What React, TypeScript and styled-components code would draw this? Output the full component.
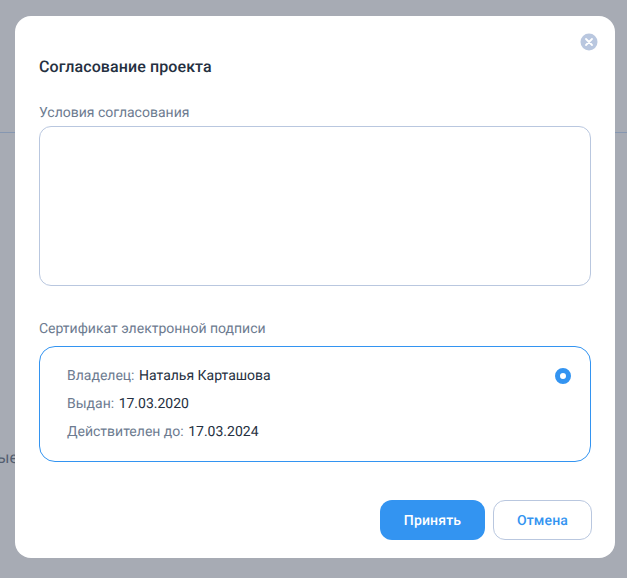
import React, { useState } from 'react';
import styled, { createGlobalStyle, css } from 'styled-components';

const GlobalStyle = createGlobalStyle`
  *, *::before, *::after { box-sizing: border-box; }
  body {
    margin: 0;
    overflow: hidden;
    background: #a7abb4;
    font-family: Roboto, 'Liberation Sans', sans-serif;
    font-size: 14px;
    color: #253041;
    text-rendering: geometricPrecision;
  }
`;

const Page = styled.div`
  position: relative;
  display: flex;
  justify-content: center;
  align-items: flex-start;
  height: 578px;
  width: 627px;
  padding: 16px 12px 0 15px;
  overflow: hidden;
`;

const Backdrop = styled.div`
  position: absolute;
  inset: 0;
  padding-top: 132px;
`;

const BackdropRule = styled.div`
  height: 1px;
  background: #8697b1;
`;

const BackdropText = styled.div`
  width: 18px;
  margin-top: 315px;
  display: flex;
  justify-content: flex-end;
  font-size: 16px;
  line-height: 20px;
  color: #535e70;
`;

const Modal = styled.form`
  position: relative;
  display: flex;
  flex-direction: column;
  width: 600px;
  height: 542px;
  padding: 41px 24px 18px;
  border-radius: 16px;
  background: #fff;
`;

const CloseButton = styled.button`
  position: absolute;
  top: 17px;
  right: 17px;
  width: 18px;
  height: 18px;
  padding: 0;
  border: 0;
  background: none;
  cursor: pointer;

  svg { display: block; }
`;

const Title = styled.h1`
  margin: 0 0 26px;
  font-size: 16px;
  font-weight: 500;
  line-height: 20px;
  letter-spacing: 0.1px;
`;

const Label = styled.label<{ $gap: number }>`
  display: block;
  margin-bottom: ${({ $gap }) => $gap}px;
  line-height: 20px;
  color: #6d7b90;
`;

const Terms = styled.textarea`
  display: block;
  flex: none;
  width: 552px;
  height: 160px;
  margin: 0 0 33px;
  padding: 12px;
  border: 1px solid #b9c7df;
  border-radius: 12px;
  outline: none;
  resize: none;
  font: inherit;
`;

const Certificate = styled.div`
  display: flex;
  justify-content: space-between;
  width: 552px;
  height: 116px;
  padding: 15px 19px 13px 27px;
  border: 1px solid #3394f1;
  border-radius: 16px;
`;

const Details = styled.dl`
  margin: 0;
`;

const Detail = styled.div`
  display: flex;
  gap: 4.5px;
  line-height: 28px;
`;

const Term = styled.dt`
  color: #6d7b90;
`;

const Value = styled.dd`
  margin: 0;
`;

const Radio = styled.span`
  width: 16px;
  height: 16px;
  margin-top: 6px;
  border: 5px solid #3394f1;
  border-radius: 50%;
`;

const Actions = styled.div`
  display: flex;
  justify-content: flex-end;
  gap: 8px;
  margin: auto -1px 0 0;
`;

const Button = styled.button<{ $primary?: boolean; $width: number }>`
  width: ${({ $width }) => $width}px;
  height: 40px;
  padding: 2px 0 0;
  border-radius: 12px;
  font: 500 14px/20px Roboto, 'Liberation Sans', sans-serif;
  letter-spacing: 0.15px;
  text-rendering: inherit;
  cursor: pointer;
  ${({ $primary }) =>
    $primary
      ? css`
          border: 0;
          background: #3394f1;
          color: #fff;
        `
      : css`
          border: 1px solid #b9c7df;
          background: #fff;
          color: #3394f1;
        `}
`;

const details = [
  ['Владелец:', 'Наталья Карташова'],
  ['Выдан:', '17.03.2020'],
  ['Действителен до:', '17.03.2024'],
];

export default function App() {
  const [terms, setTerms] = useState('');

  return (
    <>
      <GlobalStyle />
      <Page>
        <Backdrop>
          <BackdropRule />
          <BackdropText>ые</BackdropText>
        </Backdrop>
        <Modal onSubmit={(e) => e.preventDefault()}>
          <CloseButton type="button" aria-label="Закрыть">
            <svg width="18" height="18" viewBox="0 0 18 18" fill="none">
              <circle cx="9" cy="9" r="8.5" fill="#b9c7df" />
              <path d="M6 6l6 6M12 6l-6 6" stroke="#fff" strokeWidth="1.8" strokeLinecap="round" />
            </svg>
          </CloseButton>
          <Title>Согласование проекта</Title>
          <Label htmlFor="terms" $gap={3}>Условия согласования</Label>
          <Terms id="terms" value={terms} onChange={(e) => setTerms(e.target.value)} />
          <Label as="div" $gap={7}>Сертификат электронной подписи</Label>
          <Certificate>
            <Details>
              {details.map(([term, value]) => (
                <Detail key={term}>
                  <Term>{term}</Term>
                  <Value>{value}</Value>
                </Detail>
              ))}
            </Details>
            <Radio />
          </Certificate>
          <Actions>
            <Button type="submit" $primary $width={105}>Принять</Button>
            <Button type="button" $width={99}>Отмена</Button>
          </Actions>
        </Modal>
      </Page>
    </>
  );
}
